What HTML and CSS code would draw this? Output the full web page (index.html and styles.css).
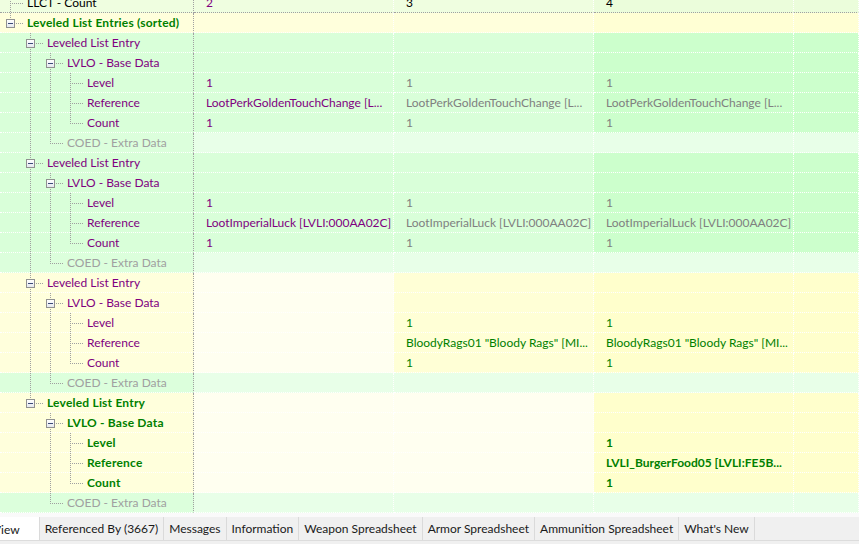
FILE: index.html
```html
<!DOCTYPE html>
<html lang="en">
<head>
  <meta charset="UTF-8">
  <title>Record View</title>
  <link rel="stylesheet" href="styles.css">
</head>
<body>
  <div class="grid">
    <div class="row top">
      <div class="tree"><span class="node leaf mid"></span><span class="label">LLCT - Count</span></div>
      <div class="cell c2 purple">2</div><div class="cell c3">3</div><div class="cell c4">4</div><div class="cell c5"></div>
    </div>
    <div class="row sorted">
      <div class="tree"><span class="node box"><span class="toggle"></span></span><span class="label green bold">Leveled List Entries (sorted)</span></div>
      <div class="cell c2"></div><div class="cell c3"></div><div class="cell c4"></div><div class="cell c5"></div>
    </div>

    <!-- entry 1 -->
    <div class="row grn">
      <div class="tree"><span class="guide"></span><span class="node box more"><span class="toggle"></span></span><span class="label purple">Leveled List Entry</span></div>
      <div class="cell c2"></div><div class="cell c3"></div><div class="cell c4"></div><div class="cell c5"></div>
    </div>
    <div class="row grn">
      <div class="tree"><span class="guide"></span><span class="guide v"></span><span class="node box more"><span class="toggle"></span></span><span class="label purple">LVLO - Base Data</span></div>
      <div class="cell c2"></div><div class="cell c3"></div><div class="cell c4"></div><div class="cell c5"></div>
    </div>
    <div class="row grn">
      <div class="tree"><span class="guide"></span><span class="guide v"></span><span class="guide v"></span><span class="node leaf mid"></span><span class="label purple">Level</span></div>
      <div class="cell c2 purple">1</div><div class="cell c3 grey">1</div><div class="cell c4 grey">1</div><div class="cell c5"></div>
    </div>
    <div class="row grn">
      <div class="tree"><span class="guide"></span><span class="guide v"></span><span class="guide v"></span><span class="node leaf mid"></span><span class="label purple">Reference</span></div>
      <div class="cell c2 purple">LootPerkGoldenTouchChange [L...</div><div class="cell c3 grey">LootPerkGoldenTouchChange [L...</div><div class="cell c4 grey">LootPerkGoldenTouchChange [L...</div><div class="cell c5"></div>
    </div>
    <div class="row grn">
      <div class="tree"><span class="guide"></span><span class="guide v"></span><span class="guide v"></span><span class="node leaf"></span><span class="label purple">Count</span></div>
      <div class="cell c2 purple">1</div><div class="cell c3 grey">1</div><div class="cell c4 grey">1</div><div class="cell c5"></div>
    </div>
    <div class="row extra">
      <div class="tree"><span class="guide"></span><span class="guide v"></span><span class="node leaf"></span><span class="label muted">COED - Extra Data</span></div>
      <div class="cell c2"></div><div class="cell c3"></div><div class="cell c4"></div><div class="cell c5"></div>
    </div>

    <!-- entry 2 -->
    <div class="row grn">
      <div class="tree"><span class="guide"></span><span class="node box more"><span class="toggle"></span></span><span class="label purple">Leveled List Entry</span></div>
      <div class="cell c2"></div><div class="cell c3"></div><div class="cell c4"></div><div class="cell c5"></div>
    </div>
    <div class="row grn">
      <div class="tree"><span class="guide"></span><span class="guide v"></span><span class="node box more"><span class="toggle"></span></span><span class="label purple">LVLO - Base Data</span></div>
      <div class="cell c2"></div><div class="cell c3"></div><div class="cell c4"></div><div class="cell c5"></div>
    </div>
    <div class="row grn">
      <div class="tree"><span class="guide"></span><span class="guide v"></span><span class="guide v"></span><span class="node leaf mid"></span><span class="label purple">Level</span></div>
      <div class="cell c2 purple">1</div><div class="cell c3 grey">1</div><div class="cell c4 grey">1</div><div class="cell c5"></div>
    </div>
    <div class="row grn">
      <div class="tree"><span class="guide"></span><span class="guide v"></span><span class="guide v"></span><span class="node leaf mid"></span><span class="label purple">Reference</span></div>
      <div class="cell c2 purple">LootImperialLuck [LVLI:000AA02C]</div><div class="cell c3 grey">LootImperialLuck [LVLI:000AA02C]</div><div class="cell c4 grey">LootImperialLuck [LVLI:000AA02C]</div><div class="cell c5"></div>
    </div>
    <div class="row grn">
      <div class="tree"><span class="guide"></span><span class="guide v"></span><span class="guide v"></span><span class="node leaf"></span><span class="label purple">Count</span></div>
      <div class="cell c2 purple">1</div><div class="cell c3 grey">1</div><div class="cell c4 grey">1</div><div class="cell c5"></div>
    </div>
    <div class="row extra">
      <div class="tree"><span class="guide"></span><span class="guide v"></span><span class="node leaf"></span><span class="label muted">COED - Extra Data</span></div>
      <div class="cell c2"></div><div class="cell c3"></div><div class="cell c4"></div><div class="cell c5"></div>
    </div>

    <!-- entry 3 -->
    <div class="row yel">
      <div class="tree"><span class="guide"></span><span class="node box more"><span class="toggle"></span></span><span class="label purple">Leveled List Entry</span></div>
      <div class="cell c2"></div><div class="cell c3"></div><div class="cell c4"></div><div class="cell c5"></div>
    </div>
    <div class="row yel">
      <div class="tree"><span class="guide"></span><span class="guide v"></span><span class="node box more"><span class="toggle"></span></span><span class="label purple">LVLO - Base Data</span></div>
      <div class="cell c2"></div><div class="cell c3"></div><div class="cell c4"></div><div class="cell c5"></div>
    </div>
    <div class="row yel">
      <div class="tree"><span class="guide"></span><span class="guide v"></span><span class="guide v"></span><span class="node leaf mid"></span><span class="label purple">Level</span></div>
      <div class="cell c2"></div><div class="cell c3 green">1</div><div class="cell c4 green">1</div><div class="cell c5"></div>
    </div>
    <div class="row yel">
      <div class="tree"><span class="guide"></span><span class="guide v"></span><span class="guide v"></span><span class="node leaf mid"></span><span class="label purple">Reference</span></div>
      <div class="cell c2"></div><div class="cell c3 green">BloodyRags01 "Bloody Rags" [MI...</div><div class="cell c4 green">BloodyRags01 "Bloody Rags" [MI...</div><div class="cell c5"></div>
    </div>
    <div class="row yel">
      <div class="tree"><span class="guide"></span><span class="guide v"></span><span class="guide v"></span><span class="node leaf"></span><span class="label purple">Count</span></div>
      <div class="cell c2"></div><div class="cell c3 green">1</div><div class="cell c4 green">1</div><div class="cell c5"></div>
    </div>
    <div class="row extra">
      <div class="tree"><span class="guide"></span><span class="guide v"></span><span class="node leaf"></span><span class="label muted">COED - Extra Data</span></div>
      <div class="cell c2"></div><div class="cell c3"></div><div class="cell c4"></div><div class="cell c5"></div>
    </div>

    <!-- entry 4 -->
    <div class="row yel new">
      <div class="tree"><span class="guide"></span><span class="node box"><span class="toggle"></span></span><span class="label green bold">Leveled List Entry</span></div>
      <div class="cell c2"></div><div class="cell c3"></div><div class="cell c4"></div><div class="cell c5"></div>
    </div>
    <div class="row yel new">
      <div class="tree"><span class="guide"></span><span class="guide"></span><span class="node box more"><span class="toggle"></span></span><span class="label green bold">LVLO - Base Data</span></div>
      <div class="cell c2"></div><div class="cell c3"></div><div class="cell c4"></div><div class="cell c5"></div>
    </div>
    <div class="row yel new">
      <div class="tree"><span class="guide"></span><span class="guide"></span><span class="guide v"></span><span class="node leaf mid"></span><span class="label green bold">Level</span></div>
      <div class="cell c2"></div><div class="cell c3"></div><div class="cell c4 green bold">1</div><div class="cell c5"></div>
    </div>
    <div class="row yel new">
      <div class="tree"><span class="guide"></span><span class="guide"></span><span class="guide v"></span><span class="node leaf mid"></span><span class="label green bold">Reference</span></div>
      <div class="cell c2"></div><div class="cell c3"></div><div class="cell c4 green bold">LVLI_BurgerFood05 [LVLI:FE5B...</div><div class="cell c5"></div>
    </div>
    <div class="row yel new">
      <div class="tree"><span class="guide"></span><span class="guide"></span><span class="guide v"></span><span class="node leaf"></span><span class="label green bold">Count</span></div>
      <div class="cell c2"></div><div class="cell c3"></div><div class="cell c4 green bold">1</div><div class="cell c5"></div>
    </div>
    <div class="row extra">
      <div class="tree"><span class="guide"></span><span class="guide"></span><span class="node leaf"></span><span class="label muted">COED - Extra Data</span></div>
      <div class="cell c2"></div><div class="cell c3"></div><div class="cell c4"></div><div class="cell c5"></div>
    </div>
  </div>

  <div class="tabbar">
    <div class="tabs">
      <div class="tab active">View</div>
      <div class="tab">Referenced By (3667)</div>
      <div class="tab">Messages</div>
      <div class="tab">Information</div>
      <div class="tab">Weapon Spreadsheet</div>
      <div class="tab">Armor Spreadsheet</div>
      <div class="tab">Ammunition Spreadsheet</div>
      <div class="tab">What's New</div>
    </div>
  </div>
</body>
</html>
```

FILE: styles.css
```css
:root {
  --dot-v: repeating-linear-gradient(#a0a0a0 0 1px, transparent 1px 2px);
  --dot-h: repeating-linear-gradient(to right, #a0a0a0 0 1px, transparent 1px 2px);
}

html, body {
  height: 100%;
}

body {
  margin: 0;
  overflow: hidden;
  font-family: Lato, "Liberation Sans", sans-serif;
  font-size: 12px;
  color: #000;
  background-color: #f0f0f0;
  display: flex;
  flex-direction: column;
}

.grid {
  margin-top: -7px;
}

.row {
  display: flex;
  height: 20px;
}

.tree,
.cell {
  box-sizing: border-box;
  height: 20px;
  line-height: 19px;
  border-bottom: 1px dotted #fff;
  white-space: nowrap;
  overflow: hidden;
}

.tree {
  display: flex;
  width: 194px;
  flex-shrink: 0;
  border-right: 1px dotted #a0a0a0;
}

.cell {
  width: 200px;
  flex-shrink: 0;
  padding-left: 12px;
  border-right: 1px dotted #fff;
}

.cell.c5 {
  flex: 1;
}

.row.top .tree,
.row.top .cell {
  border-bottom-color: #a0a0a0;
}

/* tree guides */
.guide {
  width: 20px;
  flex-shrink: 0;
}

.guide.v {
  background: var(--dot-v) 10px 0 / 1px 100% no-repeat;
}

.node {
  width: 24px;
  flex-shrink: 0;
}

.node.leaf {
  background:
    var(--dot-h) 12px 10px / 12px 1px no-repeat,
    var(--dot-v) 10px 0 / 1px 11px no-repeat;
}

.node.leaf.mid {
  background:
    var(--dot-h) 12px 10px / 12px 1px no-repeat,
    var(--dot-v) 10px 0 / 1px 100% no-repeat;
}

.node.box {
  padding: 6px 0 0 6px;
  box-sizing: border-box;
  background:
    var(--dot-h) 16px 10px / 8px 1px no-repeat,
    var(--dot-v) 10px 0 / 1px 6px no-repeat;
}

.node.box.more {
  background:
    var(--dot-h) 16px 10px / 8px 1px no-repeat,
    var(--dot-v) 10px 0 / 1px 6px no-repeat,
    var(--dot-v) 10px 16px / 1px 4px no-repeat;
}

.toggle {
  display: flex;
  align-items: center;
  justify-content: center;
  width: 9px;
  height: 9px;
  box-sizing: border-box;
  border: 1px solid #919191;
  background: linear-gradient(#ffffff, #e4e8ef);
}

.toggle::after {
  content: "";
  width: 5px;
  height: 1px;
  background-color: #3c4a78;
}

.label {
  padding-left: 3px;
}

/* text colours */
.purple { color: #800080; }
.green { color: #008000; }
.grey { color: #808080; }
.muted { color: #a0a0a0; }
.bold { font-weight: bold; }

.label.bold {
  letter-spacing: 0.2px;
}

/* row colours */
.row.top { background-color: #effee0; }
.row.top .c4, .row.top .c5 { background-color: #ebfddb; }

.row.sorted { background-color: #ffffdc; }
.row.sorted .c4, .row.sorted .c5 { background-color: #ffffd4; }

.row.grn { background-color: #d9ffd9; }
.row.grn .c4, .row.grn .c5 { background-color: #ccffcc; }

.row.extra { background-color: #e8ffe8; }
.row.extra .tree { background-color: #dcffdc; }

.row.yel { background-color: #ffffcc; }
.row.yel .tree { background-color: #ffffdc; }
.row.yel .c2 { background-color: #fffff0; }
.row.yel .c3 { background-color: #ffffd6; }
.row.yel.new .c3 { background-color: #fffff0; }

/* bottom tabs */
.tabbar {
  border-top: 4px solid #fafafa;
  background-color: #f0f0f0;
  flex: 1;
}

.tabs {
  display: flex;
  height: 24px;
  border-bottom: 1px solid #dcdcdc;
  box-sizing: border-box;
}

.tab {
  padding: 1px 5px 0;
  line-height: 22px;
  color: #1a1a1a;
  border-right: 1px solid #dadada;
  white-space: nowrap;
}

.tab.active {
  margin-left: -7px;
  padding: 2px 19px 0 0;
  background-color: #fff;
}
```
